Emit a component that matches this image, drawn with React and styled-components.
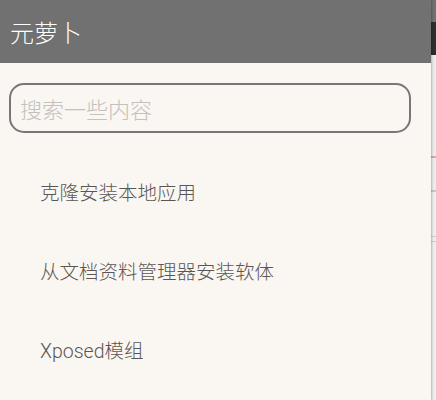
import React from "react";
import styled, { createGlobalStyle } from "styled-components";

const GlobalStyle = createGlobalStyle`
  html, body { margin: 0; padding: 0; background: #e4e4e4; }
  body { font-family: Roboto, "Noto Sans CJK SC", sans-serif; }
`;

const Screen = styled.div`
  display: flex;
  width: 436px;
  height: 400px;
  overflow: hidden;
`;

const Drawer = styled.aside`
  display: flex;
  flex-direction: column;
  width: 431px;
  flex-shrink: 0;
  background: #faf6f2;
  box-shadow: 1px 0 2px rgba(0, 0, 0, 0.25);
  z-index: 1;
`;

const Backdrop = styled.div`
  flex: 1;
  display: flex;
  flex-direction: column;
  background: #ededed;
`;

const Strip = styled.div`
  height: ${({ h }) => h}px;
  background: ${({ c }) => c};
  flex-shrink: 0;
`;

const Header = styled.header`
  display: flex;
  align-items: center;
  height: 63px;
  padding: 0 10px;
  background: #717171;
  color: #fff;
  font-size: 24px;
  font-weight: 300;
  font-family: "Noto Sans CJK SC", sans-serif;
`;

const SearchWrap = styled.div`
  padding: 20px 20px 0 9px;
`;

const SearchInput = styled.input`
  box-sizing: border-box;
  width: 402px;
  height: 50px;
  border: 2px solid #777;
  border-radius: 15px;
  background: transparent;
  padding: 0 9px;
  font-size: 22px;
  font-weight: 300;
  font-family: "Noto Sans CJK SC", sans-serif;
  color: #444;
  outline: none;
  &::placeholder { color: #c4c0bc; }
`;

const Menu = styled.ul`
  list-style: none;
  margin: 0;
  padding: 19px 0 0;
`;

const Item = styled.li`
  display: flex;
  align-items: center;
  height: 79px;
  padding-left: 40px;
  font-size: 19.5px;
  font-weight: 300;
  color: #5a5654;
  font-family: Roboto, "Noto Sans CJK SC", sans-serif;
`;

const items = ["克隆安装本地应用", "从文档资料管理器安装软体", "Xposed模组"];

export default function App() {
  return (
    <>
      <GlobalStyle />
      <Screen>
        <Drawer>
          <Header>元萝卜</Header>
          <SearchWrap>
            <SearchInput placeholder="搜索一些内容" />
          </SearchWrap>
          <Menu>
            {items.map((t) => (
              <Item key={t}>{t}</Item>
            ))}
          </Menu>
        </Drawer>
        <Backdrop>
          <Strip h={22} c="#707070" />
          <Strip h={33} c="#2e2e2e" />
          <Strip h={101} c="#ececec" />
          <Strip h={2} c="#d9a8a8" />
          <Strip h={32} c="#ececec" />
          <Strip h={2} c="#c8c8c8" />
          <Strip h={44} c="#ededed" />
          <Strip h={1} c="#cfcfcf" />
          <Strip h={4} c="#ededed" />
          <Strip h={1} c="#cfcfcf" />
        </Backdrop>
      </Screen>
    </>
  );
}
